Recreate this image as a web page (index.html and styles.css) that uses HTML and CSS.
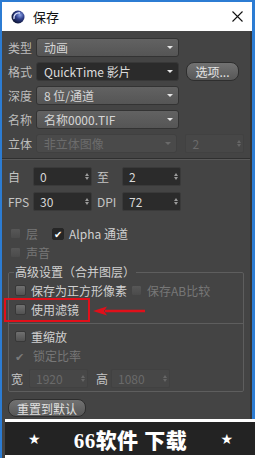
FILE: index.html
```html
<!DOCTYPE html>
<html>
<head>
    <meta charset="UTF-8">
    <title>保存</title>
    <link rel="stylesheet" href="styles.css">
</head>
<body>
    <div class="window">
        <div class="title-bar">
            <svg class="app-icon" width="14" height="14" viewBox="0 0 14 14">
                <defs>
                    <radialGradient id="ball" cx="0.65" cy="0.35" r="0.7">
                        <stop offset="0" stop-color="#8ea6e8"/>
                        <stop offset="0.45" stop-color="#2f3f8c"/>
                        <stop offset="1" stop-color="#0c1330"/>
                    </radialGradient>
                </defs>
                <circle cx="7" cy="7" r="6.5" fill="url(#ball)"/>
                <path d="M3 9 A5 5 0 0 1 9 3" stroke="#dfe6ff" stroke-width="1.4" fill="none"/>
            </svg>
            <span class="title-text">保存</span>
            <svg class="close" width="11" height="11" viewBox="0 0 11 11">
                <path d="M0.5 0.5 L10.5 10.5 M10.5 0.5 L0.5 10.5" stroke="#111" stroke-width="1.1"/>
            </svg>
        </div>

        <div class="content">
            <div class="field-row">
                <span class="label">类型</span>
                <div class="select">动画<i class="arrow"></i></div>
            </div>
            <div class="field-row">
                <span class="label">格式</span>
                <div class="select select-dark">QuickTime 影片<i class="arrow"></i></div>
                <button class="btn-option">选项...</button>
            </div>
            <div class="field-row">
                <span class="label">深度</span>
                <div class="select">8 位/通道<i class="arrow"></i></div>
            </div>
            <div class="field-row">
                <span class="label">名称</span>
                <div class="select">名称0000.TIF<i class="arrow"></i></div>
            </div>
            <div class="field-row">
                <span class="label">立体</span>
                <div class="select disabled">非立体图像<i class="arrow"></i></div>
                <div class="spin spin-disabled spin-stereo">2<i class="spin-arrows"></i></div>
            </div>

            <div class="separator"></div>

            <div class="spin-row">
                <span class="spin-label">自</span>
                <div class="spin">0<i class="spin-arrows"></i></div>
                <span class="spin-label">至</span>
                <div class="spin">2<i class="spin-arrows"></i></div>
            </div>
            <div class="spin-row">
                <span class="spin-label">FPS</span>
                <div class="spin">30<i class="spin-arrows"></i></div>
                <span class="spin-label">DPI</span>
                <div class="spin">72<i class="spin-arrows"></i></div>
            </div>

            <div class="check-row first">
                <span class="check disabled"></span>
                <span class="check-text dim">层</span>
                <span class="check checked">&#10004;</span>
                <span class="check-text">Alpha 通道</span>
            </div>
            <div class="check-row">
                <span class="check disabled"></span>
                <span class="check-text dim">声音</span>
            </div>

            <fieldset class="group">
                <legend>高级设置（合并图层）</legend>
                <div class="check-row">
                    <span class="check"></span>
                    <span class="check-text">保存为正方形像素</span>
                    <span class="check disabled"></span>
                    <span class="check-text dim">保存AB比较</span>
                </div>
                <div class="check-row">
                    <span class="check"></span>
                    <span class="check-text">使用滤镜</span>
                </div>
                <div class="group-line"></div>
                <div class="check-row">
                    <span class="check"></span>
                    <span class="check-text">重缩放</span>
                </div>
                <div class="check-row">
                    <span class="tick-dim">&#10004;</span>
                    <span class="check-text dim">锁定比率</span>
                </div>
                <div class="spin-row dim-row">
                    <span class="spin-label small">宽</span>
                    <div class="spin spin-disabled">1920<i class="spin-arrows"></i></div>
                    <span class="spin-label small">高</span>
                    <div class="spin spin-disabled">1080<i class="spin-arrows"></i></div>
                </div>

                <!-- 标注框和箭头 -->
                <div class="mark-box"></div>
                <svg class="mark-arrow" width="52" height="10" viewBox="0 0 52 10">
                    <path d="M12 5 L52 5" stroke="#e0101a" stroke-width="2.5"/>
                    <path d="M0 5 L14 0.5 L11 5 L14 9.5 Z" fill="#e0101a"/>
                </svg>
            </fieldset>

            <button class="btn-reset">重置到默认</button>
        </div>

        <div class="banner">
            <span class="star">★</span>
            <span class="banner-text">66软件 下载</span>
            <span class="star">★</span>
        </div>
    </div>
</body>
</html>
```

FILE: styles.css
```css
* {
  margin: 0px;
  padding: 0px;
  box-sizing: border-box;
}
html, body {
  width: 255px;
  height: 458px;
  overflow: hidden;
}
body {
  background: #2c7cd3;
  font-family: "Noto Sans CJK SC", "Liberation Sans", sans-serif;
  font-size: 12px;
  color: #cfcfcf;
}
.window {
  width: 255px;
  height: 458px;
  border-top: 2px solid #2c7cd3;
  border-left: 2px solid #2c7cd3;
  border-right: 3px solid #2c7cd3;
  display: flex;
  flex-direction: column;
  background: #444;
}
.title-bar {
  flex: none;
  height: 29px;
  background: #fff;
  display: flex;
  align-items: center;
  padding-left: 9px;
  padding-right: 9px;
}
.app-icon {
  margin-right: 8px;
}
.title-text {
  color: #111;
  font-size: 13px;
  flex: 1;
}
.content {
  flex: 1;
  padding: 7px 6px 0px 6px;
  border-right: 2px solid #353535;
}
.field-row {
  display: flex;
  align-items: center;
  height: 19px;
  margin-bottom: 5px;
}
.label {
  width: 28px;
  color: #bdbdbd;
}
.select {
  position: relative;
  width: 143px;
  height: 19px;
  line-height: 17px;
  padding-left: 7px;
  border: 1px solid #333;
  border-radius: 3px;
  background: linear-gradient(#626262, #555);
  color: #d6d6d6;
}
.select-dark {
  background: #2b2b2b;
  border-color: #383838;
  color: #dcdcdc;
}
.select.disabled {
  background: #4a4a4a;
  border-color: #404040;
  color: #6c6c6c;
}
.arrow {
  position: absolute;
  right: 5px;
  top: 7px;
  width: 0px;
  height: 0px;
  border-left: 3px solid transparent;
  border-right: 3px solid transparent;
  border-top: 3px solid #e6e6e6;
}
.select.disabled .arrow {
  border-top-color: #6a6a6a;
}
.btn-option {
  margin-left: 7px;
  width: 53px;
  height: 19px;
  border: 1px solid #2e2e2e;
  border-radius: 8px;
  background: linear-gradient(#727272, #575757);
  color: #e4e4e4;
  font-family: inherit;
  font-size: 12px;
  line-height: 16px;
}
.spin {
  position: relative;
  width: 59px;
  height: 19px;
  line-height: 17px;
  padding-left: 6px;
  background: #2b2b2b;
  border: 1px solid #3a3a3a;
  border-radius: 2px;
  color: #d8d8d8;
}
.spin-disabled {
  background: #474747;
  border-color: #414141;
  color: #6a6a6a;
}
.spin-stereo {
  margin-left: 8px;
}
.spin-arrows {
  position: absolute;
  right: 2px;
  top: 5px;
  width: 0px;
  height: 0px;
  border-left: 2px solid transparent;
  border-right: 2px solid transparent;
  border-bottom: 3px solid #9a9a9a;
}
.spin-arrows:after {
  content: "";
  position: absolute;
  left: -2px;
  top: 4px;
  border-left: 2px solid transparent;
  border-right: 2px solid transparent;
  border-top: 3px solid #9a9a9a;
}
.spin-disabled .spin-arrows {
  border-bottom-color: #666;
}
.spin-disabled .spin-arrows:after {
  border-top-color: #666;
}
.separator {
  height: 2px;
  margin: 5px -6px 7px -6px;
  border-top: 1px solid #2f2f2f;
  border-bottom: 1px solid #585858;
}
.spin-row {
  display: flex;
  align-items: center;
  height: 19px;
  margin-bottom: 6px;
}
.spin-label {
  width: 25px;
  color: #c4c4c4;
}
.spin-label + .spin + .spin-label {
  margin-left: 5px;
}
.check-row {
  display: flex;
  align-items: center;
  height: 19px;
  flex: none;
}
.check-row.first {
  margin-top: 13px;
}
.check {
  display: inline-block;
  width: 11px;
  height: 11px;
  margin-left: 2px;
  border: 1px solid #383838;
  border-radius: 2px;
  background: linear-gradient(#707070, #525252);
  font-size: 10px;
  line-height: 9px;
  text-align: center;
  color: #fff;
}
.check.disabled {
  background: linear-gradient(#575757, #4b4b4b);
  border-color: #444;
}
.check.checked {
  width: 12px;
  height: 12px;
  background: #262626;
  border-color: #262626;
  margin-left: 14px;
}
.check-text {
  margin-left: 5px;
  color: #d0d0d0;
}
.check-text.dim {
  color: #777;
}
.check-text + .check.disabled {
  margin-left: 4px;
}
.tick-dim {
  width: 13px;
  color: #7a7a7a;
  font-size: 11px;
  margin-left: 2px;
}
.group {
  position: relative;
  margin-top: 2px;
  padding: 0px 5px 3px 4px;
  border: 1px solid #5e5e5e;
  border-radius: 2px;
}
.group legend {
  margin-left: 1px;
  padding: 0px 1px;
  line-height: 16px;
  color: #d0d0d0;
}
.group .check-row:first-of-type {
  margin-top: 1px;
}
.group-line {
  height: 1px;
  margin: 4px -5px 3px -4px;
  background: #5e5e5e;
}
.dim-row {
  margin-top: 4px;
  margin-bottom: 0px;
  margin-left: -2px;
}
.spin-label.small {
  width: 18px;
}
.dim-row .spin-label.small + .spin + .spin-label {
  margin-left: 5px;
  width: 18px;
  text-align: right;
  padding-right: 3px;
}
.mark-box {
  position: absolute;
  left: -5px;
  top: 18px;
  width: 86px;
  height: 24px;
  border: 2px solid #e0101a;
}
.mark-arrow {
  position: absolute;
  left: 84px;
  top: 26px;
}
.btn-reset {
  display: block;
  margin-top: 7px;
  width: 78px;
  height: 18px;
  border: 1px solid #2e2e2e;
  border-radius: 8px;
  background: linear-gradient(#727272, #575757);
  color: #e0e0e0;
  font-family: inherit;
  font-size: 12px;
  line-height: 15px;
}
.banner {
  flex: none;
  height: 39px;
  margin-left: 3px;
  margin-right: -3px;
  background: #232323;
  border-top: 3px solid #fff;
  border-bottom: 3px solid #fff;
  display: flex;
  align-items: center;
  justify-content: space-between;
  padding: 0px 22px 0px 23px;
  color: #fff;
}
.star {
  font-size: 14px;
  font-family: "DejaVu Sans", sans-serif;
}
.banner-text {
  font-family: "Liberation Serif", "Noto Sans CJK SC", serif;
  font-weight: 900;
  font-size: 21px;
  letter-spacing: 0.5px;
}
```
